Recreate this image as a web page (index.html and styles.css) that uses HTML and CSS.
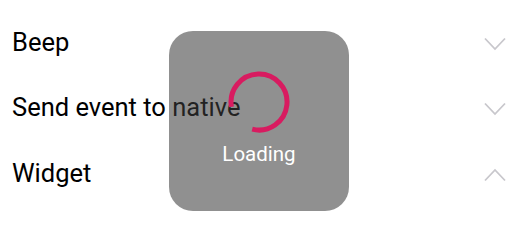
FILE: index.html
```html
<!DOCTYPE html>
<html>
<head>
<meta charset="utf-8">
<link rel="stylesheet" href="styles.css">
</head>
<body>
<div class="list">
  <div class="row">
    <span class="label">Beep</span>
    <svg class="chev" width="22" height="14" viewBox="0 0 22 14"><polyline points="1,1.5 11,12 21,1.5" fill="none" stroke="#c8c7cc" stroke-width="1.8"/></svg>
  </div>
  <div class="row">
    <span class="label">Send event to native</span>
    <svg class="chev" width="22" height="14" viewBox="0 0 22 14"><polyline points="1,1.5 11,12 21,1.5" fill="none" stroke="#c8c7cc" stroke-width="1.8"/></svg>
  </div>
  <div class="row">
    <span class="label">Widget</span>
    <svg class="chev" width="22" height="14" viewBox="0 0 22 14"><polyline points="1,12.5 11,2 21,12.5" fill="none" stroke="#c8c7cc" stroke-width="1.8"/></svg>
  </div>
</div>
<div class="loader">
  <svg class="spinner" width="66" height="66" viewBox="0 0 66 66">
    <path d="M 5.45 37.9 A 28 28 0 1 1 26.2 60.2" fill="none" stroke="#d81b60" stroke-width="5"/>
  </svg>
  <div class="loading-text">Loading</div>
</div>
</body>
</html>
```
FILE: styles.css
```css
html, body {
  margin: 0;
  padding: 0;
  background: #ffffff;
}
body {
  width: 520px;
  height: 218px;
  position: relative;
  overflow: hidden;
  font-family: Roboto, "Noto Sans", sans-serif;
}
.list {
  padding-top: 10px;
}
.row {
  height: 65.5px;
  display: flex;
  align-items: center;
  justify-content: space-between;
  padding: 0 14px 0 12px;
}
.label {
  font-size: 25.5px;
  color: #000;
  line-height: 1;
  margin-top: -1px;
}
.chev {
  display: block;
  margin-top: 2px;
}
.loader {
  position: absolute;
  left: 169px;
  top: 31px;
  width: 180px;
  height: 180px;
  border-radius: 24px;
  background: rgba(60, 60, 60, 0.57);
  display: flex;
  flex-direction: column;
  align-items: center;
}
.spinner {
  display: block;
  margin-top: 38px;
}
.loading-text {
  color: #fff;
  font-size: 20.5px;
  line-height: 1;
  margin-top: 9px;
}
```
